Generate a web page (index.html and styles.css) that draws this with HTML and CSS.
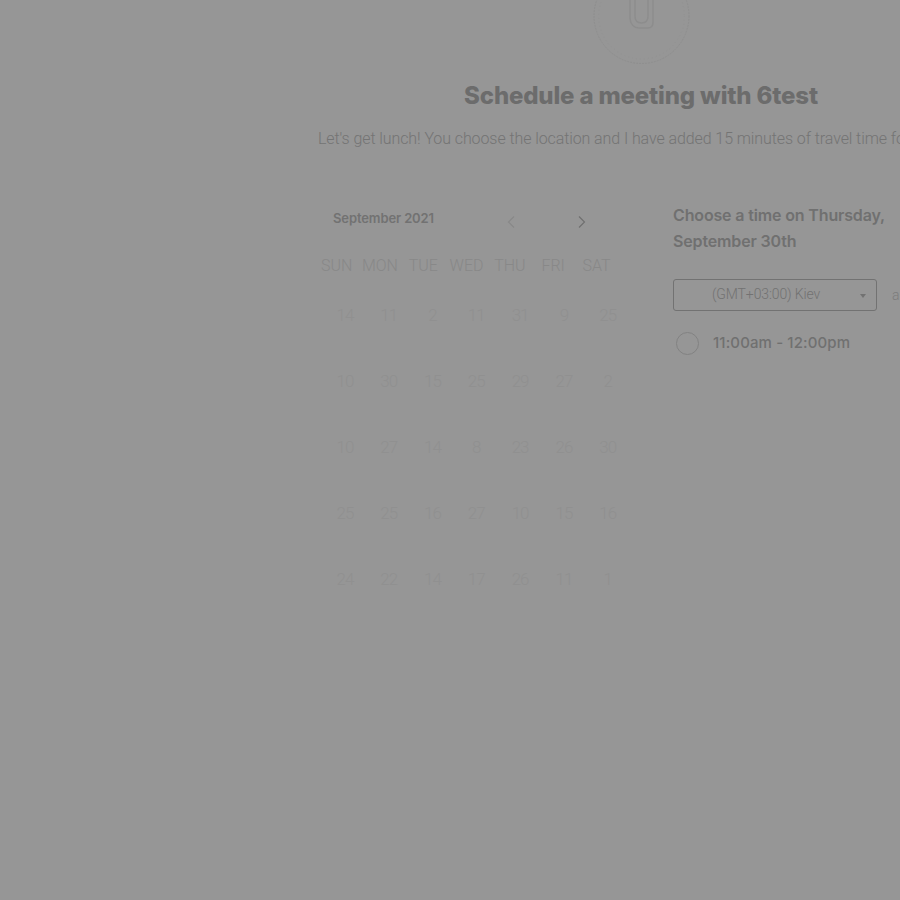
FILE: index.html
```html
<!DOCTYPE html>
<html lang="en">
<head>
<meta charset="utf-8">
<title>Schedule a meeting with 6test</title>
<link rel="stylesheet" href="styles.css">
</head>
<body>
<main class="page">
  <svg class="logo" width="100" height="66" viewBox="0 0 100 66" fill="none" aria-hidden="true">
    <circle class="logo-ring" cx="50.5" cy="16" r="47.5"/>
    <circle class="logo-ring-inner" cx="50.5" cy="16" r="43"/>
    <path class="logo-clip" d="M39 0V18C39 24 43 28 48 28H57C60 28 62 26 62 22V0M44 0V16C44 20 46 23 50.500 23C55 23 57 20 57 16V0"/>
  </svg>
  <h1 class="title">Schedule a meeting with 6test</h1>
  <p class="subtitle">Let's get lunch! You choose the location and I have added 15 minutes of travel time for you.</p>
  <div class="content">
    <section class="calendar">
      <header class="cal-head">
        <span class="month">September 2021</span>
        <div class="nav">
          <svg class="chev chev-off" width="10" height="14" viewBox="0 0 10 14" fill="none"><path d="M8 1.5L2.5 7L8 12.5"/></svg>
          <svg class="chev" width="10" height="14" viewBox="0 0 10 14" fill="none"><path d="M2 1.5L7.5 7L2 12.5"/></svg>
        </div>
      </header>
      <div class="weekdays">
        <span>SUN</span><span>MON</span><span>TUE</span><span>WED</span><span>THU</span><span>FRI</span><span>SAT</span>
      </div>
      <div class="days">
        <span>14</span><span>11</span><span>2</span><span>11</span><span>31</span><span>9</span><span>25</span>
        <span>10</span><span>30</span><span>15</span><span>25</span><span>29</span><span>27</span><span>2</span>
        <span>10</span><span>27</span><span>14</span><span>8</span><span>23</span><span>26</span><span>30</span>
        <span>25</span><span>25</span><span>16</span><span>27</span><span>10</span><span>15</span><span>16</span>
        <span>24</span><span>22</span><span>14</span><span>17</span><span>26</span><span>11</span><span>1</span>
      </div>
    </section>
    <section class="times">
      <h2 class="choose">Choose a time on Thursday, September 30th</h2>
      <div class="tz-row">
        <div class="select">
          <span>(GMT+03:00) Kiev</span>
          <i class="caret"></i>
        </div>
        <span class="am">am/pm</span>
      </div>
      <label class="slot">
        <i class="radio"></i>
        <span>11:00am - 12:00pm</span>
      </label>
    </section>
  </div>
</main>
</body>
</html>
```
FILE: styles.css
```css
* { box-sizing: border-box; }
html, body { margin: 0; height: 100%; }
body {
  background: #969696;
  overflow: hidden;
  width: 900px;
  height: 900px;
}
.page {
  width: 662px;
  margin-left: 310px;
  display: flex;
  flex-direction: column;
  align-items: center;
}
.logo { display: block; flex: none; }
.logo-ring { stroke: #8f8f8f; stroke-width: 1; stroke-dasharray: 2 1; }
.logo-ring-inner { stroke: #939393; stroke-width: 1; stroke-dasharray: 1 3; }
.logo-clip { stroke: #8d8d8d; stroke-width: 1.5; }
.title {
  margin: 15px 0 0;
  font: 800 24px/30px Inter, sans-serif;
  letter-spacing: -0.16px;
  color: #6c6c6c;
  white-space: nowrap;
}
.subtitle {
  margin: 17px 0 0;
  align-self: flex-start;
  padding-left: 8px;
  font: 300 16px/22px Roboto, sans-serif;
  letter-spacing: -0.09px;
  color: #747474;
  white-space: nowrap;
}
.content {
  align-self: flex-start;
  display: flex;
  margin-top: 52px;
  padding-left: 7px;
  gap: 36px;
}
.calendar { width: 320px; }
.cal-head {
  display: flex;
  align-items: center;
  height: 32px;
  padding-left: 16px;
}
.month {
  width: 173px;
  font: 600 13px/18px Inter, sans-serif;
  letter-spacing: -0.12px;
  color: #727272;
}
.nav { display: flex; gap: 61px; padding-top: 8px; }
.chev { display: block; }
.chev path { stroke: #707070; stroke-width: 1.2; }
.chev-off path { stroke: #888888; }
.weekdays, .days {
  display: grid;
  text-align: center;
}
.weekdays {
  grid-template-columns: repeat(7, 43.3px);
  margin-top: 21px;
  margin-left: -2px;
  font: 300 16px/22px Roboto, sans-serif;
  color: #888888;
}
.days {
  grid-template-columns: repeat(7, 43.8px);
  margin-top: 26px;
  grid-auto-rows: 66px;
  font: 300 17px/24px Roboto, sans-serif;
  letter-spacing: -1px;
  color: #909090;
  padding-left: 6px;
}
.times { width: 228px; }
.choose {
  margin: 0;
  font: 600 16px/26px Inter, sans-serif;
  letter-spacing: -0.15px;
  color: #707070;
}
.tz-row {
  display: flex;
  align-items: center;
  gap: 15px;
  margin-top: 25px;
  white-space: nowrap;
}
.select {
  width: 204px;
  height: 32px;
  flex: none;
  display: flex;
  align-items: center;
  position: relative;
  padding: 0 0 2px 38px;
  border: 1px solid #727272;
  border-radius: 3px;
  font: 300 14px/20px Roboto, sans-serif;
  letter-spacing: -0.12px;
  color: #727272;
}
.caret {
  position: absolute;
  right: 10px;
  top: 14px;
  border: 3.5px solid transparent;
  border-top: 4px solid #727272;
  border-bottom: 0;
}
.am {
  font: 300 14px/20px Roboto, sans-serif;
  color: #7c7c7c;
}
.slot {
  display: flex;
  align-items: center;
  gap: 14px;
  margin-top: 20px;
  padding-left: 3px;
  font: 500 15px/24px Inter, sans-serif;
  letter-spacing: 0.12px;
  color: #707070;
}
.radio {
  width: 23px;
  height: 23px;
  border: 1px solid #828282;
  border-radius: 50%;
  flex: none;
}
```
